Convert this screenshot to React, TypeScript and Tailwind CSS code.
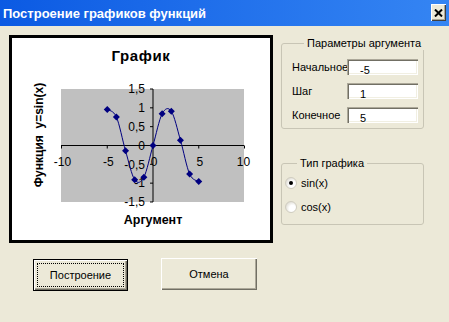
import React from 'react';

const X0 = 153;
const Y0 = 145.5;
const SX = 9.15;
const SY = 37.67;

const points = Array.from({ length: 11 }, (_, i) => {
  const x = i - 5;
  return { x: X0 + x * SX, y: Y0 - Math.sin(x) * SY };
});

// catmull-rom -> bezier, close to what Excel does for "smoothed line"
function smoothPath(pts: { x: number; y: number }[]) {
  let d = `M${pts[0].x},${pts[0].y}`;
  for (let i = 0; i < pts.length - 1; i++) {
    const p0 = pts[i - 1] ?? pts[i];
    const p1 = pts[i];
    const p2 = pts[i + 1];
    const p3 = pts[i + 2] ?? p2;
    const c1x = p1.x + (p2.x - p0.x) / 6;
    const c1y = p1.y + (p2.y - p0.y) / 6;
    const c2x = p2.x - (p3.x - p1.x) / 6;
    const c2y = p2.y - (p3.y - p1.y) / 6;
    d += ` C${c1x},${c1y} ${c2x},${c2y} ${p2.x},${p2.y}`;
  }
  return d;
}

const xLabels = [-10, -5, 0, 5, 10];
const yLabels = ['1,5', '1', '0,5', '0', '-0,5', '-1', '-1,5'];

function Chart() {
  const font = 'Liberation Sans, Arial, sans-serif';
  return (
    <svg width={258} height={202} viewBox="12 38 258 202" fontFamily={font}>
      <text x={141} y={61} textAnchor="middle" fontWeight="bold" fontSize={15} letterSpacing={0.6}>
        График
      </text>

      {/* plot area */}
      <rect x={61} y={89} width={183} height={113} fill="#c0c0c0" />
      <line x1={61} y1={Y0} x2={244} y2={Y0} stroke="#000" strokeWidth={1} />
      <line x1={X0} y1={89} x2={X0} y2={202} stroke="#000" strokeWidth={1} />
      {xLabels.map((v) => (
        <line key={v} x1={X0 + v * SX} y1={Y0} x2={X0 + v * SX} y2={Y0 + 3} stroke="#000" />
      ))}
      {yLabels.map((_, i) => (
        <line key={i} x1={X0 - 3} y1={89 + i * 18.83} x2={X0} y2={89 + i * 18.83} stroke="#000" />
      ))}

      {/* tick labels */}
      {xLabels.map((v) => (
        <text key={v} x={X0 + v * SX + (v === 10 ? -1 : 1)} y={166} textAnchor="middle" fontSize={12}>
          {v}
        </text>
      ))}
      {yLabels.map((l, i) => (
        <text key={l} x={145} y={89 + i * 18.83 + 4.3} textAnchor="end" fontSize={12}>
          {l}
        </text>
      ))}

      {/* series */}
      <path d={smoothPath(points)} fill="none" stroke="#000080" strokeWidth={1} />
      {points.map((p, i) => (
        <path
          key={i}
          d={`M${p.x},${p.y - 3.5} L${p.x + 3.5},${p.y} L${p.x},${p.y + 3.5} L${p.x - 3.5},${p.y} Z`}
          fill="#000080"
        />
      ))}

      {/* axis titles */}
      <text x={153} y={224} textAnchor="middle" fontWeight="bold" fontSize={12.5}>
        Аргумент
      </text>
      <text
        x={39}
        y={139.3}
        transform="rotate(-90 39 135)"
        textAnchor="middle"
        fontWeight="bold"
        fontSize={12}
      >
        {'Функция\u00a0\u00a0y=sin(x)'}
      </text>
    </svg>
  );
}

function TextField({ label, value }: { label: string; value: string }) {
  return (
    <div className="flex items-center h-[16px]">
      <span className="w-[55px] shrink-0">{label}</span>
      <div className="w-[71px] h-[16px] bg-white pl-[13px] pt-[6px] leading-[11px] shadow-[inset_1px_1px_0_#aca899,inset_2px_2px_0_#716f64,inset_-1px_-1px_0_#ffffff,inset_-2px_-2px_0_#f1efe2]">
        {value}
      </div>
    </div>
  );
}

function Radio({ label, checked }: { label: string; checked?: boolean }) {
  return (
    <div className="flex items-center h-[16px] gap-[4px]">
      <span className="w-[12px] h-[12px] rounded-full flex items-center justify-center bg-[radial-gradient(circle_at_65%_65%,#ffffff_35%,#cfccbf_100%)] border border-[#d0cdc0]">
        {checked && <span className="w-[4px] h-[4px] rounded-full bg-black" />}
      </span>
      <span>{label}</span>
    </div>
  );
}

function Button({ children, isDefault }: { children: React.ReactNode; isDefault?: boolean }) {
  return (
    <button
      type="button"
      className={
        isDefault
          ? 'relative w-[95px] h-[32px] bg-[#ece9d8] border border-black shadow-[inset_1px_1px_0_#ffffff,inset_-1px_-1px_0_#716f64,inset_-2px_-2px_0_#aca899] text-[11px]'
          : 'relative w-[96px] h-[32px] -mt-[1px] bg-[#ece9d8] shadow-[inset_1px_1px_0_#ffffff,inset_-1px_-1px_0_#716f64,inset_-2px_-2px_0_#aca899] text-[11px]'
      }
    >
      {isDefault && <span className="absolute inset-x-[3px] top-[3px] bottom-[3px] border border-dotted border-black" />}
      {children}
    </button>
  );
}

export default function App() {
  return (
    <div className="w-[449px] h-[322px] bg-[#ece9d8] flex flex-col overflow-hidden font-['Liberation_Sans',Arial,sans-serif] text-[11px] text-black">
      {/* Title bar */}
      <div className="h-[26px] shrink-0 flex items-center justify-between pl-[3px] pr-[3px] bg-gradient-to-r from-[#0b5ae3] to-[#3585f3]">
        <span className="text-white font-bold text-[13px] leading-none">Построение графиков функций</span>
        <div className="w-[15px] h-[17px] -mt-[1px] bg-[#ece9d8] flex items-center justify-center shadow-[inset_1px_1px_0_#ffffff,inset_-1px_-1px_0_#404040,inset_-2px_-2px_0_#aca899]">
          <svg width="9" height="8" viewBox="0 0 9 8">
            <path d="M1 0.5 L8 7.5 M8 0.5 L1 7.5" stroke="#000" strokeWidth="2" />
          </svg>
        </div>
      </div>

      {/* Body */}
      <div className="flex pt-[9px] pl-[9px]">
        <div className="w-[264px] h-[208px] border-[3px] border-black bg-white">
          <Chart />
        </div>

        <div className="ml-[8px] w-[143px] flex flex-col">
          <fieldset className="mt-[2px] h-[92px] min-w-0 border border-[#c8c5b5] rounded-[3px] pl-[10px] pt-[9px]">
            <legend className="ml-[12px] px-[3px] leading-[13px] whitespace-nowrap">Параметры аргумента</legend>
            <div className="flex flex-col gap-[8px]">
              <TextField label="Начальное" value="-5" />
              <TextField label="Шаг" value="1" />
              <TextField label="Конечное" value="5" />
            </div>
          </fieldset>

          <fieldset className="mt-[28px] h-[68px] min-w-0 border border-[#c8c5b5] rounded-[3px] pl-[3px] pt-[5px]">
            <legend className="ml-[12px] px-[3px] leading-[13px] whitespace-nowrap">Тип графика</legend>
            <div className="flex flex-col gap-[8px]">
              <Radio label="sin(x)" checked />
              <Radio label="cos(x)" />
            </div>
          </fieldset>
        </div>
      </div>

      {/* Buttons */}
      <div className="flex pl-[33px] pt-[16px] gap-[33px]">
        <Button isDefault>Построение</Button>
        <Button>Отмена</Button>
      </div>
    </div>
  );
}
